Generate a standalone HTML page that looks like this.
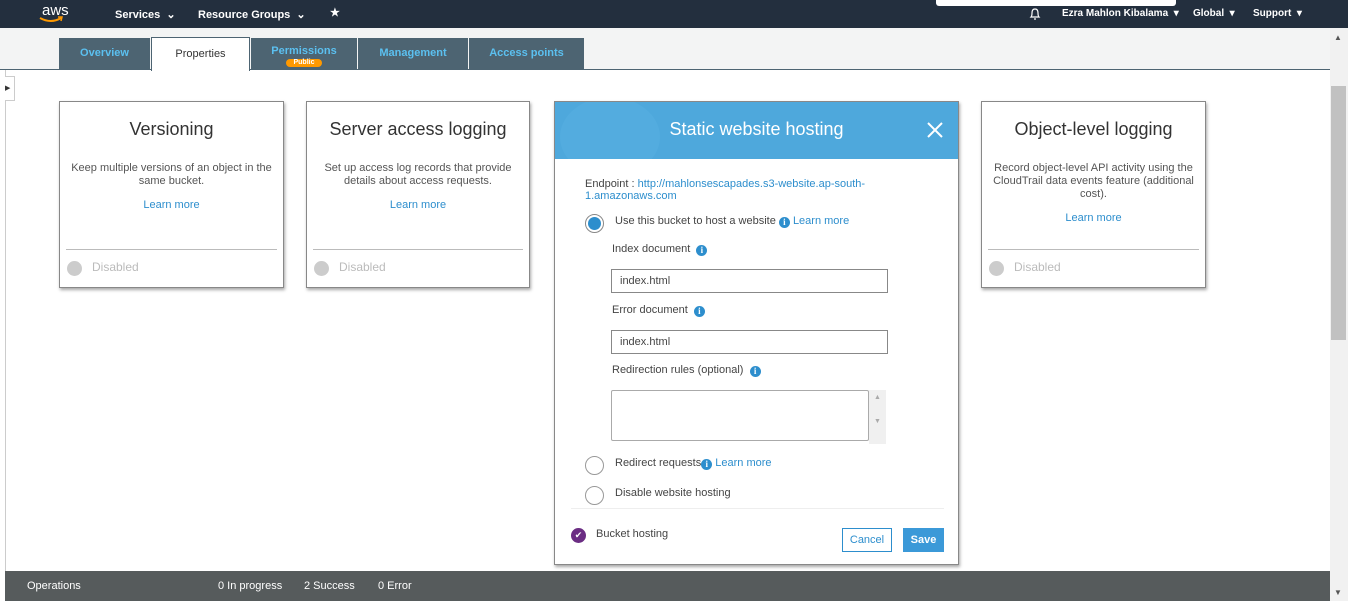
<!DOCTYPE html>
<html><head><meta charset="utf-8"><style>
*{box-sizing:border-box;margin:0;padding:0}
body{width:1348px;height:601px;overflow:hidden;background:#fff;font-family:"Liberation Sans",Arial,sans-serif;font-size:11px;color:#444;position:relative}
.abs{position:absolute}
.top{left:0;top:0;width:1348px;height:28px;background:#232f3e;color:#fff;font-size:11px;font-weight:bold}
.sub{left:0;top:28px;width:1330px;height:42px;background:#f3f4f4;border-bottom:1px solid #4d6472}
.tab{top:38px;height:32px;background:#4d6472;color:#5bc0f0;font-weight:bold;font-size:11px;text-align:center;line-height:30px}
.card{background:#fff;border:1px solid #888;box-shadow:1px 2px 3px rgba(0,0,0,.35);text-align:center}
.card h2{font-weight:normal;font-size:18px;color:#333;margin-top:17px}
.card p{font-size:11px;color:#555;margin:22px 6px 0;line-height:13px;white-space:nowrap;overflow:hidden;text-overflow:ellipsis}
.card p.lm{color:#2d8ecd}
.lm{color:#2d8ecd}
.card .ft{position:absolute;left:6px;right:6px;top:147px;border-top:1px solid #bbb;text-align:left;padding:10px 0 0 26px;color:#bbb;font-size:12px}
.card .ft:before{content:"";position:absolute;left:1px;top:11px;width:15px;height:15px;border-radius:50%;background:#ccc}
.rad{width:19px;height:19px;border:1px solid #999;border-radius:50%;background:#fff}
.inp{border:1px solid #888;background:#fff;height:24px;padding-left:8px;line-height:22px;font-size:11px;color:#444}
.ic{display:inline-block;width:11px;height:11px;border-radius:50%;background:#2d8ecd;color:#fff;font-size:9px;font-weight:bold;text-align:center;line-height:11px;vertical-align:-1px;font-family:"Liberation Serif",serif}
</style></head><body>
<div class="abs top">
 <div class="abs" style="left:42px;top:2px;font-size:15px;font-weight:normal">aws</div>
 <svg class="abs" style="left:38px;top:16px" width="26" height="8"><path d="M2 2 Q13 8 23 2" stroke="#f90" stroke-width="2" fill="none"/><path d="M20 1 L24 1 L23 5" stroke="#f90" stroke-width="1.5" fill="none"/></svg>
 <div class="abs" style="left:115px;top:8px">Services &nbsp;⌄</div>
 <div class="abs" style="left:198px;top:8px">Resource Groups &nbsp;⌄</div>
 <div class="abs" style="left:330px;top:6px">★</div>
 <div class="abs" style="left:936px;top:0;width:240px;height:6px;background:#fff;border-radius:0 0 3px 3px"></div>
 <svg class="abs" style="left:1028px;top:7px" width="14" height="14"><path d="M3 10 Q4 9 4 6 Q4 2 7 2 Q10 2 10 6 Q10 9 11 10 Z M6 12 h2" stroke="#fff" fill="none" stroke-width="1.2"/></svg>
 <div class="abs" style="left:1062px;top:8px;font-size:10px">Ezra Mahlon Kibalama &nbsp;▾</div>
 <div class="abs" style="left:1193px;top:8px;font-size:10px">Global &nbsp;▾</div>
 <div class="abs" style="left:1253px;top:8px;font-size:10px">Support &nbsp;▾</div>
</div>
<div class="abs sub"></div>
<div class="abs tab" style="left:59px;width:91px">Overview</div>
<div class="abs" style="left:151px;top:37px;width:99px;height:34px;background:#fff;border:1px solid #4d6472;border-bottom:none;text-align:center;line-height:32px;color:#333;font-size:11px">Properties</div>
<div class="abs tab" style="left:251px;width:106px;line-height:26px">Permissions<div style="position:absolute;left:35px;top:21px;width:36px;height:8px;border-radius:4px;background:#f90;color:#fff;font-size:7px;line-height:8px">Public</div></div>
<div class="abs tab" style="left:358px;width:110px">Management</div>
<div class="abs tab" style="left:469px;width:115px">Access points</div>
<div class="abs" style="left:5px;top:70px;width:1px;height:501px;background:#ccc"></div>
<div class="abs" style="left:5px;top:76px;width:10px;height:25px;border:1px solid #ccc;border-left:none;background:#fff;font-size:7px;line-height:23px;color:#333">▶</div>
<div class="abs" style="left:1330px;top:28px;width:18px;height:573px;background:#f1f1f1"></div>
<div class="abs" style="left:1331px;top:86px;width:15px;height:254px;background:#c1c1c1"></div>
<div class="abs" style="left:1334px;top:33px;font-size:8px;color:#555">▲</div>
<div class="abs" style="left:1334px;top:588px;font-size:8px;color:#555">▼</div>

<div class="abs card" style="left:59px;top:101px;width:225px;height:187px"><h2>Versioning</h2><p>Keep multiple versions of an object in the<br>same bucket.</p><p style="margin-top:11px" class="lm">Learn more</p><div class="ft">Disabled</div></div>
<div class="abs card" style="left:306px;top:101px;width:224px;height:187px"><h2>Server access logging</h2><p>Set up access log records that provide<br>details about access requests.</p><p style="margin-top:11px" class="lm">Learn more</p><div class="ft">Disabled</div></div>
<div class="abs card" style="left:981px;top:101px;width:225px;height:187px"><h2>Object-level logging</h2><p>Record object-level API activity using the<br>CloudTrail data events feature (additional<br>cost).</p><p style="margin-top:11px" class="lm">Learn more</p><div class="ft">Disabled</div></div>

<div class="abs" style="left:554px;top:101px;width:405px;height:464px;background:#fff;border:1px solid #888;box-shadow:1px 2px 3px rgba(0,0,0,.35)">
 <div class="abs" style="left:0;top:0;width:403px;height:57px;background:#4ea8dc;overflow:hidden">
  <div class="abs" style="left:5px;top:-5px;width:100px;height:80px;border-radius:50%;background:#53acdf"></div>
  <div class="abs" style="left:0;top:17px;width:403px;text-align:center;color:#fff;font-size:18px">Static website hosting</div>
  <svg class="abs" style="left:372px;top:20px" width="16" height="16"><path d="M1 1 L15 15 M15 1 L1 15" stroke="#fff" stroke-width="2"/></svg>
 </div>
 <div class="abs" style="left:30px;top:76px;line-height:12px;color:#444">Endpoint : <span class="lm">http://mahlonsescapades.s3-website.ap-south-<br>1.amazonaws.com</span></div>
 <div class="abs rad" style="left:30px;top:112px;border-color:#888;padding:2px"><div style="width:13px;height:13px;border-radius:50%;background:#2d8ecd"></div></div>
 <div class="abs" style="left:60px;top:113px">Use this bucket to host a website <span class="ic">i</span> <span class="lm">Learn more</span></div>
 <div class="abs" style="left:57px;top:141px">Index document &nbsp;<span class="ic">i</span></div>
 <div class="abs inp" style="left:56px;top:167px;width:277px">index.html</div>
 <div class="abs" style="left:57px;top:202px">Error document &nbsp;<span class="ic">i</span></div>
 <div class="abs inp" style="left:56px;top:228px;width:277px">index.html</div>
 <div class="abs" style="left:57px;top:262px">Redirection rules (optional) &nbsp;<span class="ic">i</span></div>
 <div class="abs" style="left:56px;top:288px;width:258px;height:51px;border:1px solid #aaa;border-radius:2px"></div>
 <div class="abs" style="left:314px;top:288px;width:17px;height:54px;background:#f0f0f0;color:#aaa;font-size:7px;text-align:center;line-height:12px;padding-top:2px">▲<br><br>▼</div>
 <div class="abs rad" style="left:30px;top:354px"></div>
 <div class="abs" style="left:60px;top:355px">Redirect requests<span class="ic">i</span> <span class="lm">Learn more</span></div>
 <div class="abs rad" style="left:30px;top:384px"></div>
 <div class="abs" style="left:60px;top:385px">Disable website hosting</div>
 <div class="abs" style="left:16px;top:406px;width:373px;height:1px;background:#eee"></div>
 <div class="abs" style="left:16px;top:426px;width:15px;height:15px;border-radius:50%;background:#6b2d83;color:#fff;font-size:9px;text-align:center;line-height:15px">✔</div>
 <div class="abs" style="left:41px;top:426px">Bucket hosting</div>
 <div class="abs" style="left:287px;top:426px;width:50px;height:24px;border:1px solid #2d8ecd;color:#2d8ecd;text-align:center;line-height:22px">Cancel</div>
 <div class="abs" style="left:348px;top:426px;width:41px;height:24px;background:#3b99d8;color:#fff;font-weight:bold;text-align:center;line-height:24px">Save</div>
</div>

<div class="abs" style="left:5px;top:571px;width:1325px;height:30px;background:#565b5c;color:#fff;font-size:11px">
 <div class="abs" style="left:22px;top:9px">Operations</div>
 <div class="abs" style="left:213px;top:9px">0 In progress</div>
 <div class="abs" style="left:299px;top:9px">2 Success</div>
 <div class="abs" style="left:373px;top:9px">0 Error</div>
</div>
</body></html>
